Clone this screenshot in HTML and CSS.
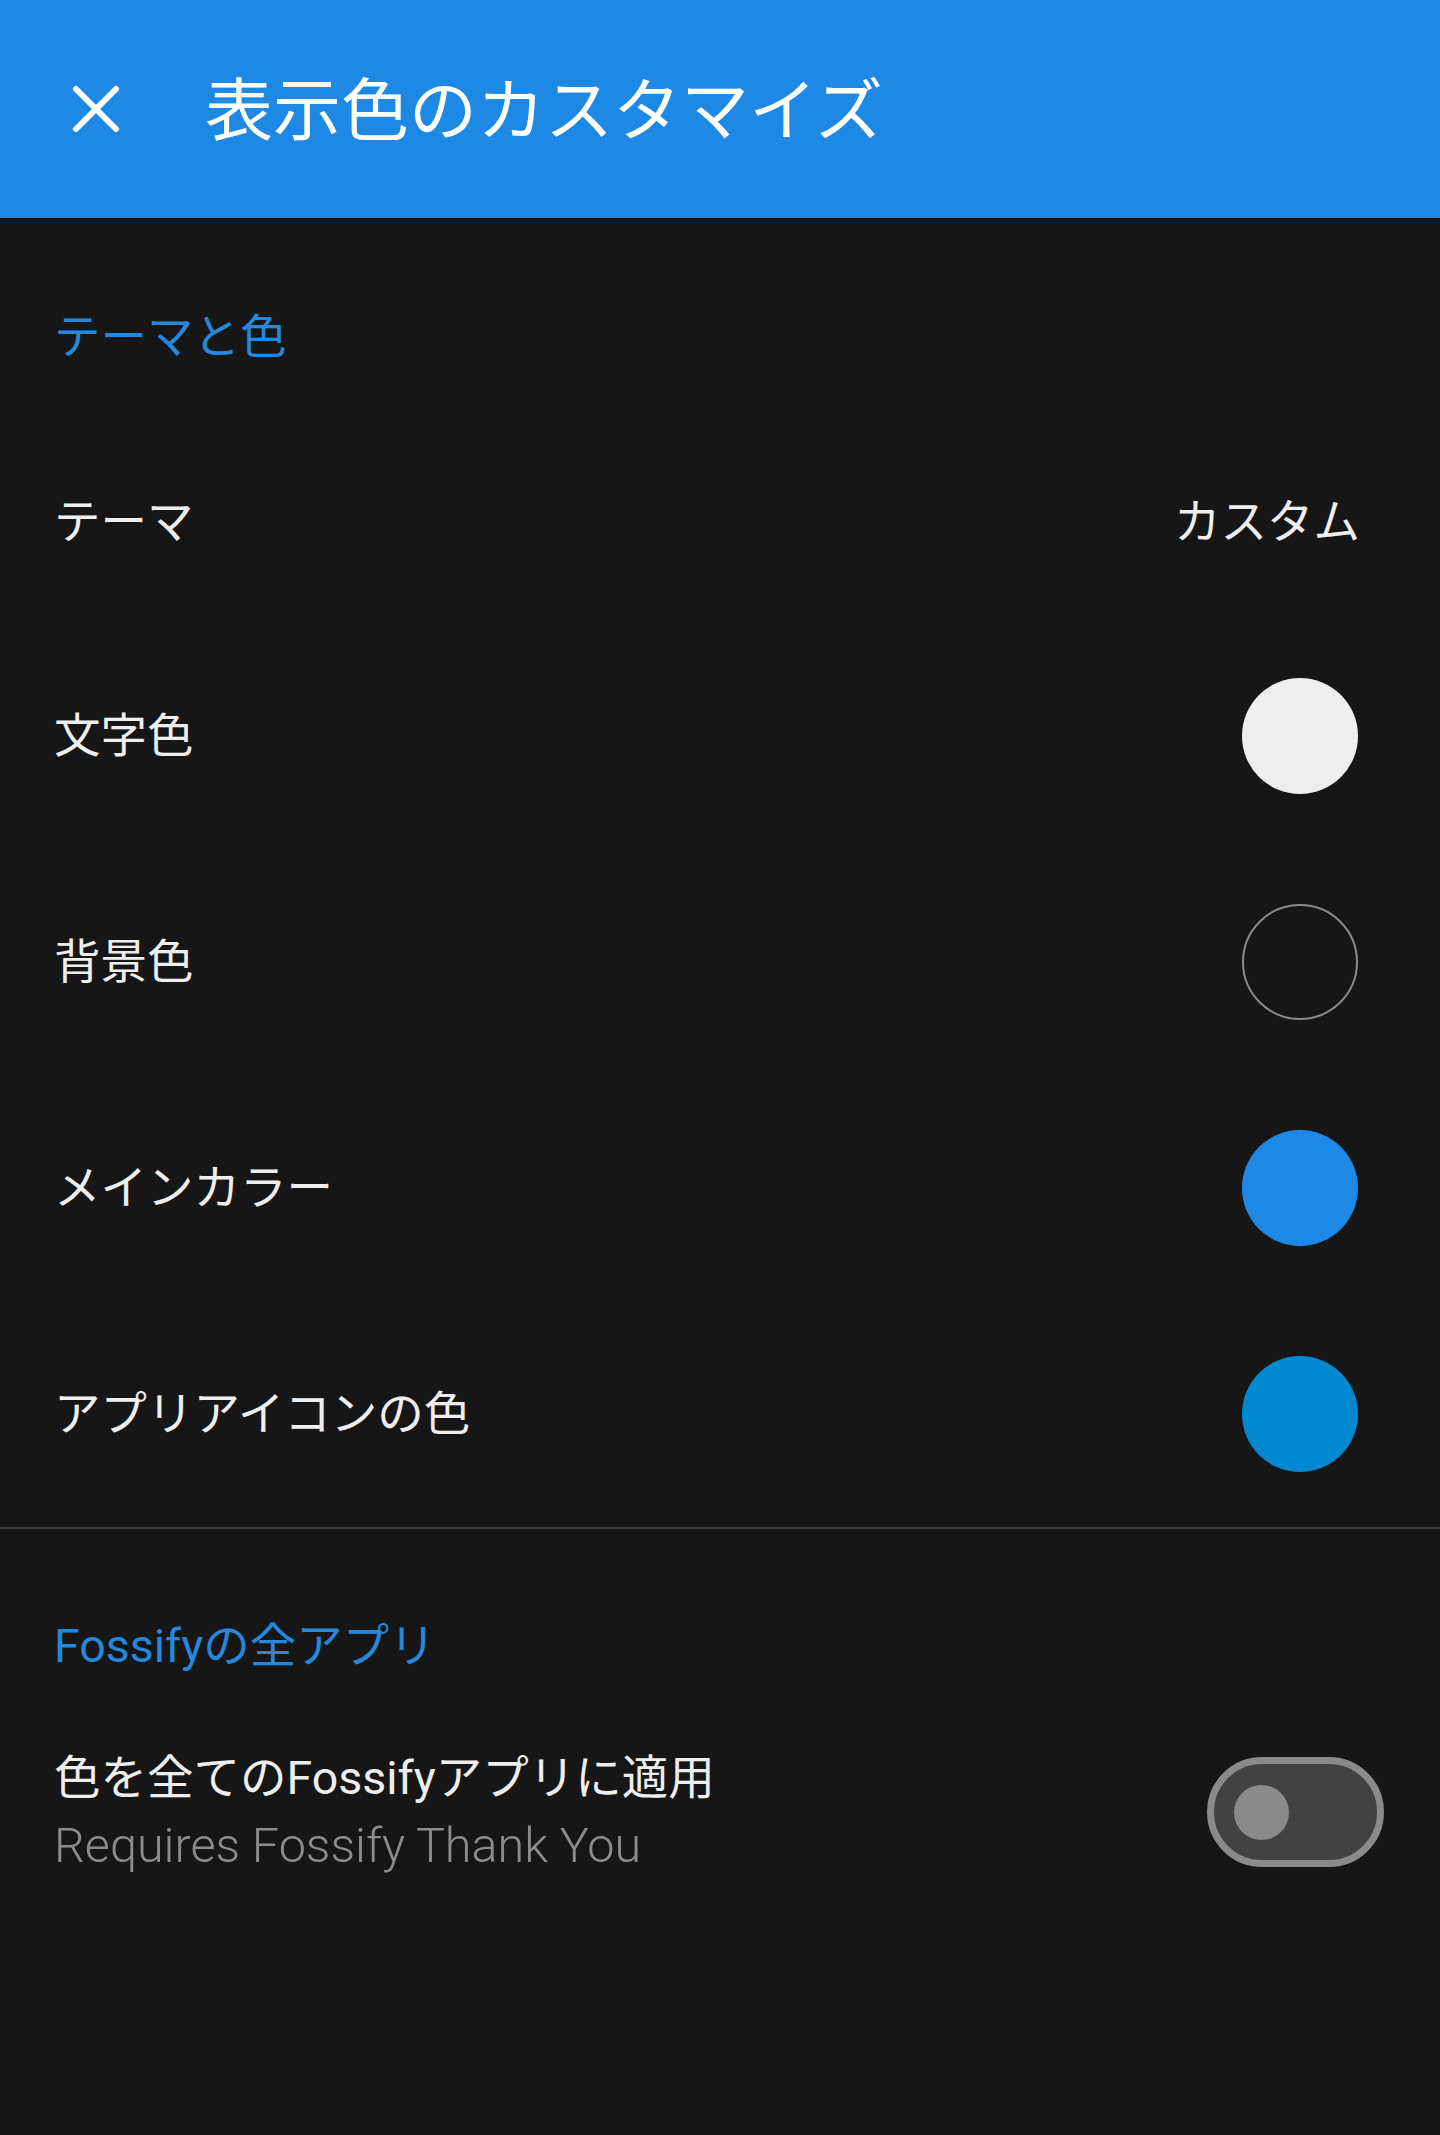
FILE: index.html
```html
<!DOCTYPE html>
<html lang="ja">
<head>
  <meta charset="UTF-8">
  <meta name="viewport" content="width=device-width, initial-scale=1.0">
  <title>表示色のカスタマイズ</title>
  <link rel="stylesheet" href="styles.css">
</head>
<body>
  <!-- Toolbar -->
  <header class="toolbar">
    <svg class="closeIcon" width="48" height="48" viewBox="0 0 48 48">
      <line x1="4" y1="4" x2="44" y2="44" />
      <line x1="44" y1="4" x2="4" y2="44" />
    </svg>
    <h1 class="toolbarTitle">表示色のカスタマイズ</h1>
  </header>

  <!-- Theme and colours -->
  <section class="section">
    <h2 class="sectionTitle">テーマと色</h2>
    <div class="row themeRow">
      <span class="rowLabel">テーマ</span>
      <span class="rowValue">カスタム</span>
    </div>
    <div class="row colorRow">
      <span class="rowLabel">文字色</span>
      <span class="swatch swatchText"></span>
    </div>
    <div class="row colorRow">
      <span class="rowLabel">背景色</span>
      <span class="swatch swatchBackground"></span>
    </div>
    <div class="row colorRow">
      <span class="rowLabel">メインカラー</span>
      <span class="swatch swatchPrimary"></span>
    </div>
    <div class="row colorRow">
      <span class="rowLabel">アプリアイコンの色</span>
      <span class="swatch swatchIcon"></span>
    </div>
  </section>

  <hr class="divider">

  <!-- All Fossify apps -->
  <section class="section">
    <h2 class="sectionTitle sectionTitleSecond">Fossifyの全アプリ</h2>
    <div class="row switchRow">
      <div class="rowText">
        <span class="rowLabel">色を全てのFossifyアプリに適用</span>
        <span class="rowSummary">Requires Fossify Thank You</span>
      </div>
      <span class="switchTrack"><span class="switchThumb"></span></span>
    </div>
  </section>
</body>
</html>
```

FILE: styles.css
```css
html, body {
  margin: 0;
  padding: 0;
}
body {
  min-height: 2135px;
  background-color: #161616;
  color: #eeeeee;
  font-family: Roboto, "Noto Sans CJK JP", sans-serif;
}
.toolbar {
  display: flex;
  align-items: center;
  height: 218px;
  padding-left: 72px;
  background-color: #1e88e5;
  box-sizing: border-box;
}
.closeIcon {
  flex-shrink: 0;
  stroke: #ffffff;
  stroke-width: 6;
  stroke-linecap: round;
}
.toolbarTitle {
  margin: 6px 0 0 85px;
  font-size: 68px;
  font-weight: normal;
  line-height: 96px;
  color: #ffffff;
}
.section {
  padding: 0;
}
.sectionTitle {
  margin: 0;
  padding: 87px 54px 52px;
  font-size: 46.5px;
  font-weight: normal;
  line-height: 64px;
  color: #2588dc;
}
.sectionTitleSecond {
  padding: 85px 54px 0;
}
.row {
  display: flex;
  align-items: center;
  justify-content: space-between;
  padding: 0 82px 0 54px;
  font-size: 46.5px;
  line-height: 64px;
}
.themeRow {
  height: 202px;
  padding-right: 80px;
}
.colorRow {
  height: 226px;
}
.rowValue {
  color: #eeeeee;
}
.swatch {
  width: 116px;
  height: 116px;
  border-radius: 50%;
  box-sizing: border-box;
}
.swatchText {
  background-color: #eeeeee;
}
.swatchBackground {
  border: 2px solid #8a8a8a;
}
.swatchPrimary {
  background-color: #1e88e5;
}
.swatchIcon {
  background-color: #0288d1;
}
.divider {
  margin: 0;
  height: 2px;
  border: none;
  background-color: #3a3a3a;
}
.switchRow {
  padding: 68px 56px 0 54px;
}
.rowText {
  display: flex;
  flex-direction: column;
  gap: 4px;
}
.rowSummary {
  font-size: 48.5px;
  font-weight: 300;
  color: #8c8c8c;
}
.switchTrack {
  display: flex;
  align-items: center;
  width: 177px;
  height: 110px;
  padding-left: 20px;
  border: 7px solid #8a8a8a;
  border-radius: 55px;
  background-color: #424242;
  box-sizing: border-box;
}
.switchThumb {
  width: 55px;
  height: 55px;
  border-radius: 50%;
  background-color: #8a8a8a;
}
```
